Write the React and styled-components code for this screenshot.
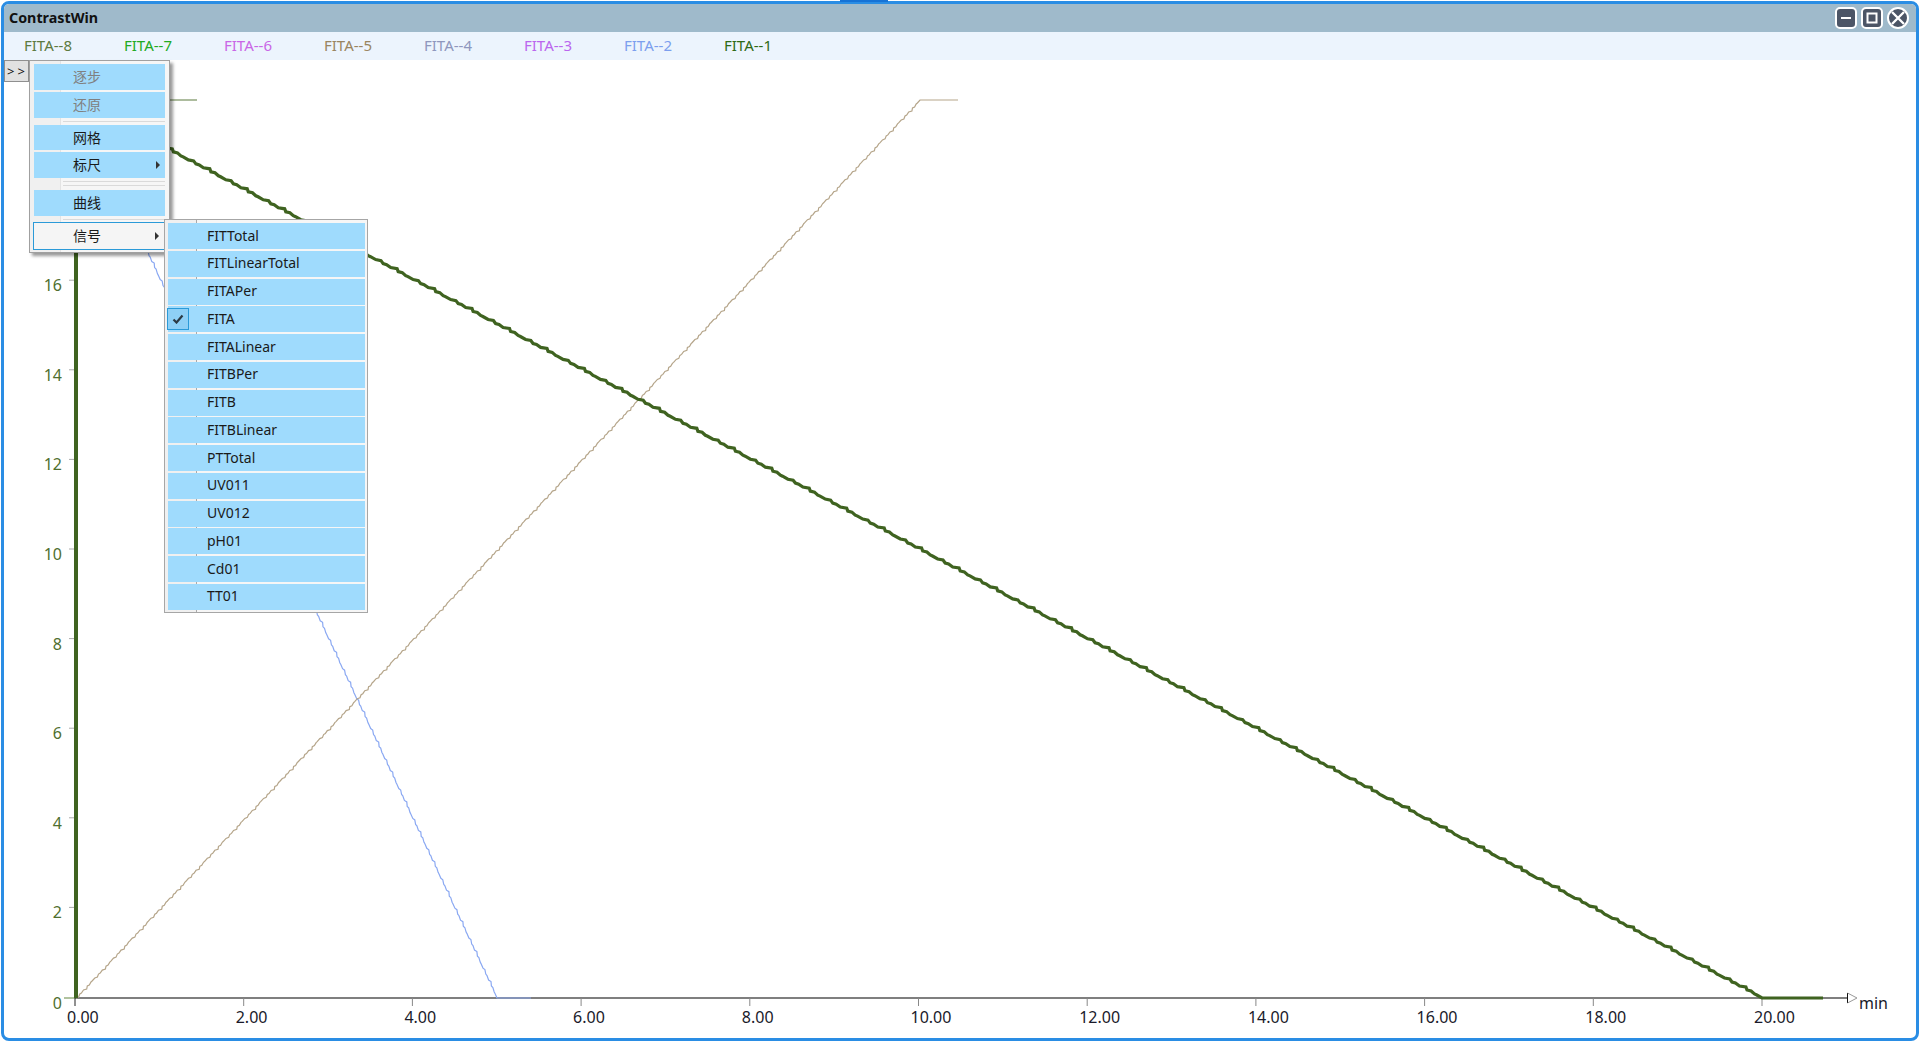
import React from 'react'
import styled, { createGlobalStyle } from 'styled-components'

const GlobalStyle = createGlobalStyle`
  html, body { margin: 0; padding: 0; height: 100%; background: #fff; overflow: hidden; }
  body { font-family: "Noto Sans", "Noto Sans CJK SC", sans-serif; }
`

const TopStrip = styled.div`
  position: absolute;
  left: 840px;
  top: 0;
  width: 48px;
  height: 2px;
  background: #1673d6;
`

const Window = styled.div`
  box-sizing: border-box;
  height: 1040px;
  margin: 1px 1px 0;
  border: 3px solid #2a8de4;
  border-radius: 8px;
  display: flex;
  flex-direction: column;
  overflow: hidden;
  background: #fff;
`

const TitleBar = styled.div`
  height: 28px;
  flex: none;
  display: flex;
  align-items: center;
  justify-content: space-between;
  padding: 0 7px 0 5px;
  background: #9fbacb;
`

const Title = styled.div`
  font-size: 14.3px;
  font-weight: 700;
  color: #111;
  padding-bottom: 2px;
`

const WinButtons = styled.div`
  display: flex;
  gap: 4px;
`

const WinButton = styled.div`
  box-sizing: border-box;
  width: 22px;
  height: 22px;
  border: 2px solid #fff;
  border-radius: ${props => props.$round ? '50%' : '5px'};
  background: #4c5566;
  display: flex;
  align-items: center;
  justify-content: center;
`

const TabBar = styled.div`
  height: 28px;
  flex: none;
  display: flex;
  align-items: center;
  padding: 0 0 3px 20px;
  box-sizing: border-box;
  background: #ecf4fd;
`

const Tab = styled.div`
  width: 100px;
  font-size: 15px;
  color: ${props => props.$color};
`

const Canvas = styled.div`
  position: relative;
  flex: 1;
`

const Chart = styled.svg`
  display: block;
  width: 1912px;
  height: 978px;
`

const ExpandButton = styled.div`
  position: absolute;
  left: 0;
  top: 0;
  box-sizing: border-box;
  width: 25px;
  height: 22px;
  padding-left: 2px;
  background: #e1e1e1;
  border: 1px solid #8f8f8f;
  font-size: 13px;
  line-height: 20px;
  letter-spacing: 3px;
  text-align: center;
  color: #111;
`

const Menu = styled.div`
  position: absolute;
  left: 25px;
  top: 0;
  box-sizing: border-box;
  width: 141px;
  height: 193px;
  padding: 3px 4px 0;
  border: 1px solid #a0a0a0;
  background: linear-gradient(90deg, #f0f0f0 30px, #e3e3e3 30px, #e3e3e3 31px, #f6f6f6 31px);
  box-shadow: 3px 3px 3px rgba(0, 0, 0, 0.4);
`

const SubMenu = styled.div`
  position: absolute;
  left: 160px;
  top: 159px;
  box-sizing: border-box;
  width: 204px;
  height: 394px;
  padding: 3px 2px 0 3px;
  border: 1px solid #a6a6a6;
  background: linear-gradient(90deg, #f0f0f0 31px, #a9a9a9 31px, #a9a9a9 32px, #f6f6f6 32px);
  display: flex;
  flex-direction: column;
  gap: 1.77px;
`

const Item = styled.div`
  position: relative;
  box-sizing: border-box;
  height: ${props => props.$height || 26}px;
  margin-bottom: ${props => props.$gap || 0}px;
  padding: 0 0 2px 39px;
  display: flex;
  align-items: center;
  background: #9fdbfd;
  font-size: 14px;
  color: ${props => props.$disabled ? '#808080' : '#1a1a1a'};
`

const HoverItem = styled(Item)`
  height: 28px;
  margin: 0 -4px 0 -1px;
  background: #f5f5f5;
  border: 1px solid #2b9ad8;
`

const SubItem = styled(Item)`
  flex: none;
  font-size: 14px;
`

const Separator = styled.div`
  height: ${props => props.$height}px;
  margin-left: 29px;
  padding-top: ${props => props.$top}px;
  box-sizing: border-box;
  &::before {
    content: '';
    display: block;
    height: 1px;
    background: #dadada;
  }
  ${props => props.$double && `
    &::after {
      content: '';
      display: block;
      height: 1px;
      margin-top: 3px;
      background: #dadada;
    }
  `}
`

const Arrow = styled.span`
  position: absolute;
  right: ${props => props.$right || 5}px;
  top: 50%;
  margin-top: -4px;
  border-left: 4px solid #333;
  border-top: 4px solid transparent;
  border-bottom: 4px solid transparent;
`

const CheckBox = styled.div`
  position: absolute;
  left: -1px;
  top: 2px;
  box-sizing: border-box;
  width: 22px;
  height: 22px;
  background: #8ed0f6;
  border: 1px solid #2b9ad8;
  display: flex;
  align-items: center;
  justify-content: center;
`

const AxisLabel = styled.text`
  font-family: "Noto Sans", sans-serif;
  font-size: 16px;
  fill: ${props => props.$color || '#1a1a2a'};
`

const tabs = [
  ['FITA--8', '#5d7a3f'],
  ['FITA--7', '#22aa22'],
  ['FITA--6', '#c966e6'],
  ['FITA--5', '#9a8560'],
  ['FITA--4', '#8f97bd'],
  ['FITA--3', '#bb66ee'],
  ['FITA--2', '#7c9fee'],
  ['FITA--1', '#2f6a14'],
]

const signals = ['FITTotal', 'FITLinearTotal', 'FITAPer', 'FITA', 'FITALinear', 'FITBPer', 'FITB', 'FITBLinear', 'PTTotal', 'UV011', 'UV012', 'pH01', 'Cd01', 'TT01']

// chart uses page coordinates through the viewBox
const originX = 76
const originY = 998
const xAt = t => 75 + t * 84.35
const yAt = v => 997 - v * 44.8

// ramp with a small uneven stair in it, the way the plotted data looks
const ramp = (x1, y1, x2, y2, step) => {
  const points = []
  const count = Math.ceil(Math.abs(y2 - y1) / step)
  const dx = (x2 - x1) / count
  const dy = (y2 - y1) / count
  for (let i = 0; i < count; i++) {
    const late = [0.7, 0.45, 0.85, 0.55, 0.3][i % 5]
    const x = x1 + dx * i
    const y = y1 + dy * i
    points.push(`${x.toFixed(1)},${y.toFixed(1)}`)
    points.push(`${(x + dx * late).toFixed(1)},${(y + dy * 0.25).toFixed(1)}`)
  }
  points.push(`${x2},${y2}`)
  return points.join(' ')
}

const Plot = () => (
  <Chart viewBox="4 60 1912 978">
    <line x1={originX - 1} y1={originY} x2="1848" y2={originY} stroke="#555" strokeWidth="1.5" />
    <line x1="64" y1={originY} x2={originX} y2={originY} stroke="#7d9a5f" strokeWidth="1.2" />
    <path d="M1847.5 993 V1003" stroke="#111" strokeWidth="1" fill="none" />
    <path d="M1847.5 993 L1857 998 L1847.5 1003" stroke="#999" strokeWidth="1" fill="none" />
    <AxisLabel x="1859" y="1009">min</AxisLabel>

    {[0, 2, 4, 6, 8, 10, 12, 14, 16, 18, 20].map(t => (
      <g key={t}>
        <line x1={xAt(t)} y1={originY} x2={xAt(t)} y2={originY + 8} stroke={t === 0 ? '#222' : '#888'} />
        <AxisLabel x={xAt(t) - 8} y="1023">{t.toFixed(2)}</AxisLabel>
      </g>
    ))}

    {[2, 4, 6, 8, 10, 12, 14, 16].map(v => (
      <g key={v}>
        <line x1="69" y1={yAt(v)} x2="75" y2={yAt(v)} stroke="#aaa" />
        <AxisLabel x="62" y={yAt(v) + 11} textAnchor="end" $color="#4f6f2f">{v}</AxisLabel>
      </g>
    ))}
    <AxisLabel x="62" y="1009" textAnchor="end" $color="#4f6f2f">0</AxisLabel>

    <path d="M76 100 H197" stroke="#5d7a3f" strokeWidth="1.2" fill="none" />
    <polyline points={`${ramp(76, 100, 497, 998, 6)} 531,998`} stroke="#8aa8f2" strokeWidth="1.2" fill="none" />
    <polyline points={`${ramp(76, 998, 920, 100, 4)} 958,100`} stroke="#b5a58a" strokeWidth="1.2" fill="none" />
    <path d="M76 998 V100" stroke="#3f6320" strokeWidth="4" fill="none" />
    <polyline points={`${ramp(76, 100, 1762, 998, 4)} 1823,998`} stroke="#3f6320" strokeWidth="3.2" fill="none" />
  </Chart>
)

const CheckMark = () => (
  <svg width="12" height="10" viewBox="0 0 12 10">
    <path d="M1.5 5.5 L4.5 8.5 L10.5 1.5" stroke="#2c3a44" strokeWidth="2.2" fill="none" />
  </svg>
)

export default function App() {
  return (
    <>
      <GlobalStyle />
      <TopStrip />
      <Window>
        <TitleBar>
          <Title>ContrastWin</Title>
          <WinButtons>
            <WinButton>
              <svg width="12" height="12" viewBox="0 0 12 12"><path d="M1 6 H11" stroke="#fff" strokeWidth="2" /></svg>
            </WinButton>
            <WinButton>
              <svg width="12" height="12" viewBox="0 0 12 12"><rect x="1.5" y="1.5" width="9" height="9" stroke="#fff" strokeWidth="2" fill="none" /></svg>
            </WinButton>
            <WinButton $round>
              <svg width="18" height="18" viewBox="0 0 18 18"><path d="M3 3 L15 15 M15 3 L3 15" stroke="#fff" strokeWidth="2.4" /></svg>
            </WinButton>
          </WinButtons>
        </TitleBar>
        <TabBar>
          {tabs.map(([name, color]) => <Tab key={name} $color={color}>{name}</Tab>)}
        </TabBar>
        <Canvas>
          <Plot />
          <ExpandButton>&gt;&gt;</ExpandButton>
          <Menu>
            <Item $disabled $gap={2}>逐步</Item>
            <Item $disabled>还原</Item>
            <Separator $height={7} $top={3} />
            <Item $height={25} $gap={2}>网格</Item>
            <Item>标尺<Arrow /></Item>
            <Separator $height={12} $top={3} $double />
            <Item>曲线</Item>
            <Separator $height={6} $top={3} />
            <HoverItem>信号<Arrow $right={9} /></HoverItem>
          </Menu>
          <SubMenu>
            {signals.map(name => (
              <SubItem key={name}>
                {name === 'FITA' && <CheckBox><CheckMark /></CheckBox>}
                {name}
              </SubItem>
            ))}
          </SubMenu>
        </Canvas>
      </Window>
    </>
  )
}
